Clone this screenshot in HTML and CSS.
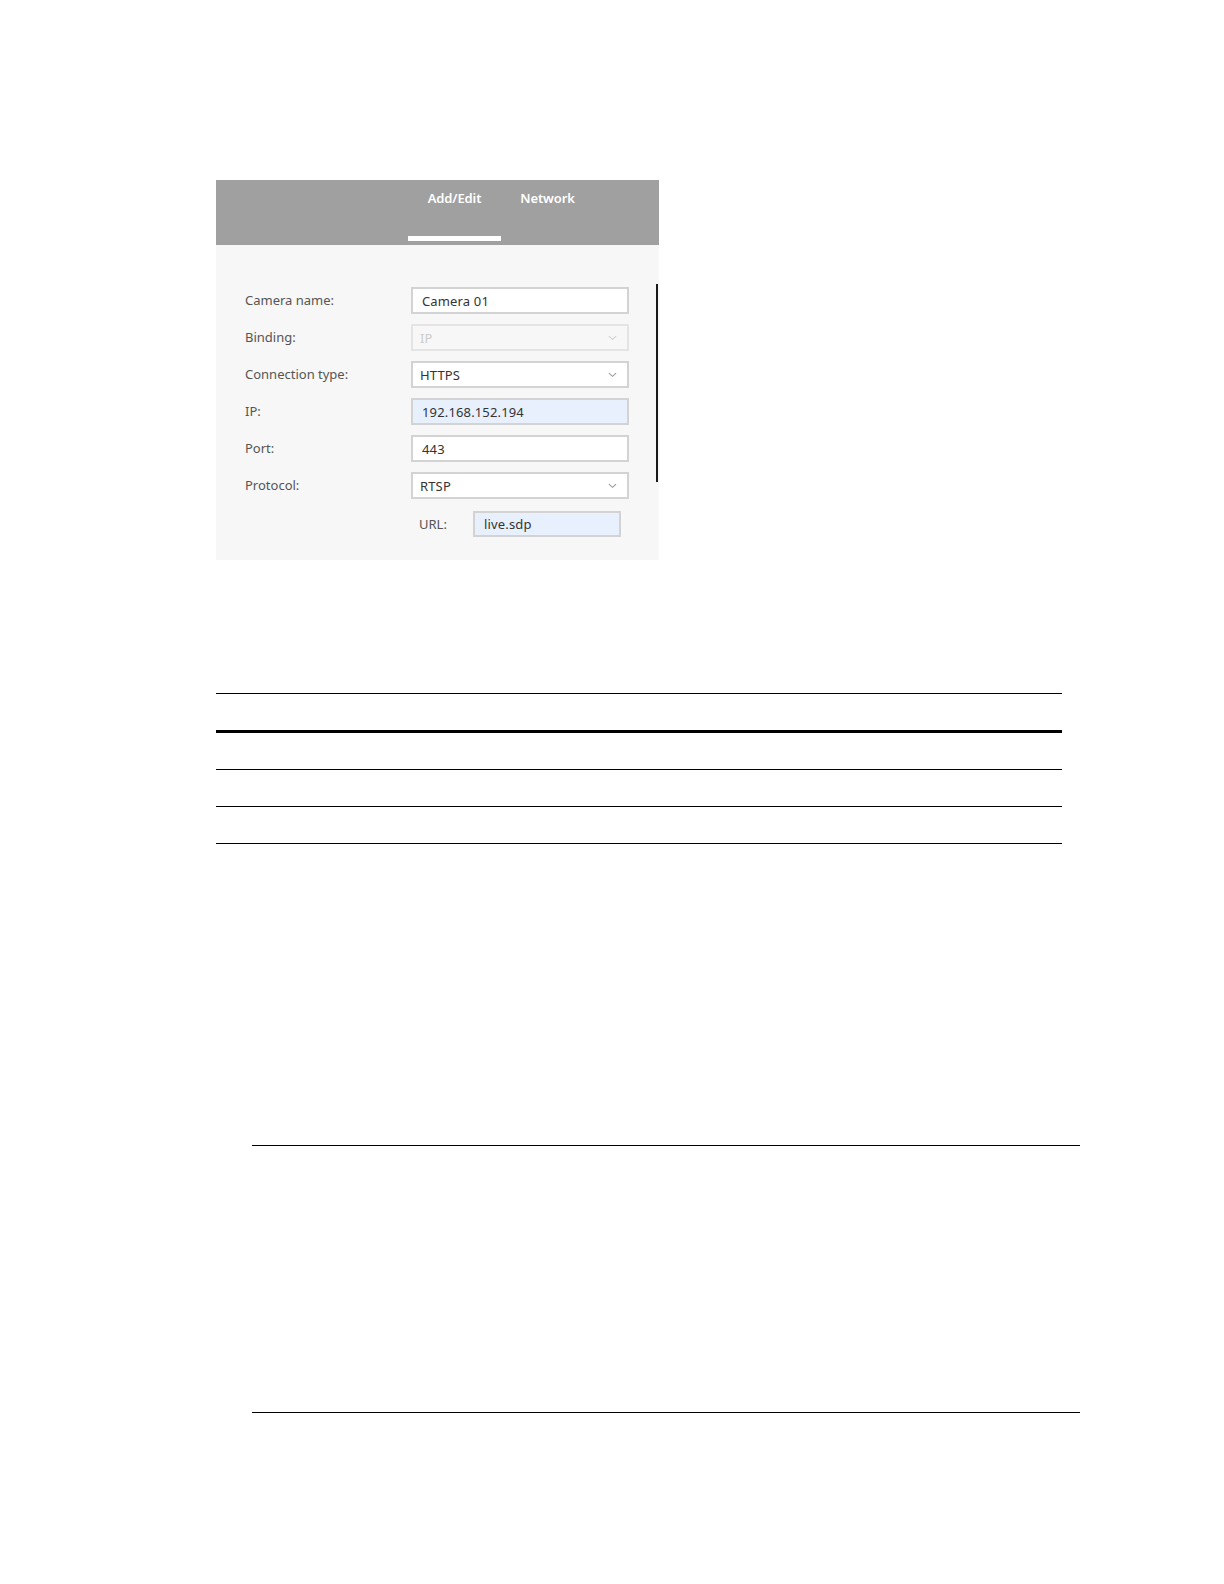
FILE: index.html
```html
<!DOCTYPE html>
<html>
<head>
<meta charset="utf-8">
<link rel="stylesheet" href="styles.css">
</head>
<body>
<div class="page">
  <div class="panel">
    <div class="panel-head">
      <div class="tab tab-active"><span class="tab-text">Add/Edit</span><span class="tab-bar"></span></div>
      <div class="tab"><span class="tab-text">Network</span><span class="tab-bar"></span></div>
    </div>
    <div class="panel-body">
      <div class="form">
        <div class="label">Camera name:</div>
        <div class="field"><span class="val">Camera 01</span></div>
        <div class="label">Binding:</div>
        <div class="field select disabled"><span class="val">IP</span><svg class="chev" viewBox="0 0 10 6" width="9" height="6"><path d="M1 1 L5 4.5 L9 1" fill="none" stroke="currentColor" stroke-width="1.2"/></svg></div>
        <div class="label">Connection type:</div>
        <div class="field select"><span class="val">HTTPS</span><svg class="chev" viewBox="0 0 10 6" width="9" height="6"><path d="M1 1 L5 4.5 L9 1" fill="none" stroke="currentColor" stroke-width="1.2"/></svg></div>
        <div class="label">IP:</div>
        <div class="field filled"><span class="val">192.168.152.194</span></div>
        <div class="label">Port:</div>
        <div class="field"><span class="val">443</span></div>
        <div class="label">Protocol:</div>
        <div class="field select"><span class="val">RTSP</span><svg class="chev" viewBox="0 0 10 6" width="9" height="6"><path d="M1 1 L5 4.5 L9 1" fill="none" stroke="currentColor" stroke-width="1.2"/></svg></div>
      </div>
      <div class="url-row">
        <div class="url-label">URL:</div>
        <div class="field filled url-field"><span class="val">live.sdp</span></div>
      </div>
      <div class="scroll-line"></div>
    </div>
  </div>

  <div class="rules">
    <div class="rule-row head"></div>
    <div class="rule-row"></div>
    <div class="rule-row"></div>
    <div class="rule-row"></div>
  </div>

  <div class="section">
    <div class="section-box"></div>
  </div>
</div>
</body>
</html>
```

FILE: styles.css
```css
html, body {
  margin: 0;
  padding: 0;
  background: #ffffff;
}

.page {
  padding-top: 180px;
  padding-left: 216px;
  font-family: "Noto Sans", "Liberation Sans", sans-serif;
}

.panel {
  width: 443px;
  background: #f7f7f7;
}

.panel-head {
  height: 65px;
  background: #a0a0a0;
  display: flex;
  padding-left: 192px;
  box-sizing: border-box;
}

.tab {
  width: 93px;
  height: 61px;
  display: flex;
  flex-direction: column;
  align-items: center;
  justify-content: space-between;
  padding-top: 9px;
  box-sizing: border-box;
}

.tab-text {
  color: #ffffff;
  font-size: 13px;
  font-weight: 600;
  line-height: 18px;
  letter-spacing: -0.1px;
}

.tab-bar {
  display: block;
  width: 100%;
  height: 5px;
}

.tab-active .tab-bar {
  background: #ffffff;
}

.panel-body {
  position: relative;
  padding: 42px 0 23px 29px;
}

.form {
  display: grid;
  grid-template-columns: 166px 218px;
  row-gap: 10px;
  align-items: center;
}

.label {
  font-size: 13px;
  color: #555555;
  line-height: 27px;
}

.field {
  height: 27px;
  box-sizing: border-box;
  border: 2px solid #d3d3d3;
  background: #ffffff;
  display: flex;
  align-items: center;
  justify-content: space-between;
  padding: 0 10px 0 9px;
}

.val {
  font-size: 13px;
  color: #333333;
  letter-spacing: 0.15px;
}

.chev {
  color: #9a9a9a;
}

.select {
  padding-left: 7px;
}

.disabled {
  background: #f7f7f7;
  border-color: #e4e4e4;
}

.disabled .val {
  color: #cccccc;
}

.disabled .chev {
  color: #cfcfcf;
}

.filled {
  background: #e9f0fd;
}

.url-row {
  display: flex;
  align-items: center;
  margin-top: 12px;
  padding-left: 174px;
}

.url-label {
  width: 54px;
  font-size: 13px;
  color: #555555;
}

.url-field {
  width: 148px;
  height: 26px;
}

.scroll-line {
  position: absolute;
  right: 1px;
  top: 39px;
  width: 2px;
  height: 198px;
  background: #1a1a1a;
}

.rules {
  width: 846px;
  margin-top: 133px;
  border-top: 1px solid #000000;
}

.rule-row {
  height: 36px;
  border-bottom: 1px solid #000000;
}

.rule-row.head {
  border-bottom: 3px solid #000000;
}

.section {
  padding-left: 36px;
  margin-top: 301px;
}

.section-box {
  width: 828px;
  height: 266px;
  border-top: 1px solid #000000;
  border-bottom: 1px solid #000000;
}
```
